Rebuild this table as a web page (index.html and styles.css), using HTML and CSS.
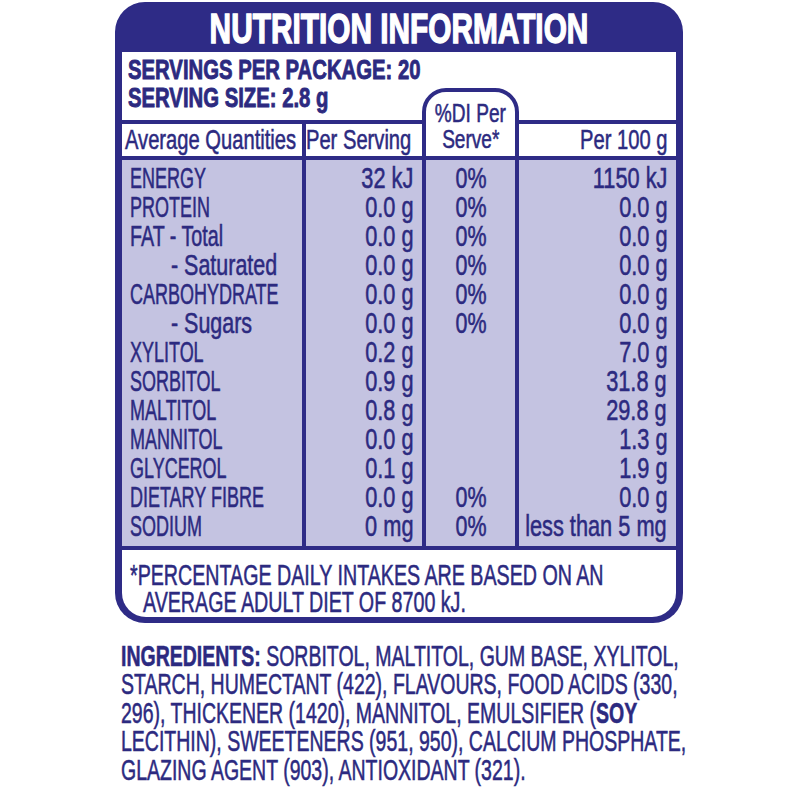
FILE: index.html
```html
<!DOCTYPE html>
<html lang="en">
<head>
<meta charset="utf-8">
<title>Nutrition Information</title>
<link rel="stylesheet" href="styles.css">
</head>
<body>
<main class="page">
  <section class="label">
    <h1 class="title"><span class="tt">NUTRITION INFORMATION</span></h1>
    <div class="inner">
      <div class="head">
        <div class="servings">
          <div class="sv">SERVINGS PER PACKAGE: 20</div>
          <div class="sv">SERVING SIZE: 2.8 g</div>
        </div>
        <div class="h h1"><span class="ht">Average Quantities</span></div>
        <div class="h h2"><span class="ht">Per Serving</span></div>
        <div class="di"><span class="dt">%DI Per</span><span class="dt">Serve*</span></div>
        <div class="h h4"><span class="ht">Per 100 g</span></div>
      </div>
      <div class="rows">
        <div class="col c1">
          <span class="l">ENERGY</span>
          <span class="l">PROTEIN</span>
          <span class="l mx">FAT - Total</span>
          <span class="l sub">- Saturated</span>
          <span class="l">CARBOHYDRATE</span>
          <span class="l sub">- Sugars</span>
          <span class="l">XYLITOL</span>
          <span class="l">SORBITOL</span>
          <span class="l">MALTITOL</span>
          <span class="l">MANNITOL</span>
          <span class="l">GLYCEROL</span>
          <span class="l">DIETARY FIBRE</span>
          <span class="l">SODIUM</span>
        </div>
        <div class="col c2">
          <span class="l">32 kJ</span>
          <span class="l">0.0 g</span>
          <span class="l">0.0 g</span>
          <span class="l">0.0 g</span>
          <span class="l">0.0 g</span>
          <span class="l">0.0 g</span>
          <span class="l">0.2 g</span>
          <span class="l">0.9 g</span>
          <span class="l">0.8 g</span>
          <span class="l">0.0 g</span>
          <span class="l">0.1 g</span>
          <span class="l">0.0 g</span>
          <span class="l">0 mg</span>
        </div>
        <div class="col c3">
          <span class="l">0%</span>
          <span class="l">0%</span>
          <span class="l">0%</span>
          <span class="l">0%</span>
          <span class="l">0%</span>
          <span class="l">0%</span>
          <span class="l blank"></span>
          <span class="l blank"></span>
          <span class="l blank"></span>
          <span class="l blank"></span>
          <span class="l blank"></span>
          <span class="l">0%</span>
          <span class="l">0%</span>
        </div>
        <div class="col c4">
          <span class="l">1150 kJ</span>
          <span class="l">0.0 g</span>
          <span class="l">0.0 g</span>
          <span class="l">0.0 g</span>
          <span class="l">0.0 g</span>
          <span class="l">0.0 g</span>
          <span class="l">7.0 g</span>
          <span class="l">31.8 g</span>
          <span class="l">29.8 g</span>
          <span class="l">1.3 g</span>
          <span class="l">1.9 g</span>
          <span class="l">0.0 g</span>
          <span class="l">less than 5 mg</span>
        </div>
      </div>
      <div class="foot">
        <div class="fl">*PERCENTAGE DAILY INTAKES ARE BASED ON AN</div>
        <div class="fl fl2">AVERAGE ADULT DIET OF 8700 kJ.</div>
      </div>
    </div>
  </section>
  <div class="ingredients">
    <div class="il"><b>INGREDIENTS:</b> SORBITOL, MALTITOL, GUM BASE, XYLITOL,</div>
    <div class="il">STARCH, HUMECTANT (422), FLAVOURS, FOOD ACIDS (330,</div>
    <div class="il">296), THICKENER (1420), MANNITOL, EMULSIFIER (<b>SOY</b></div>
    <div class="il">LECITHIN), SWEETENERS (951, 950), CALCIUM PHOSPHATE,</div>
    <div class="il">GLAZING AGENT (903), ANTIOXIDANT (321).</div>
  </div>
</main>
</body>
</html>
```

FILE: styles.css
```css
* {
  box-sizing: border-box;
  margin: 0;
  padding: 0;
}

html,
body {
  background: #ffffff;
}

body {
  font-family: "Liberation Sans", Arial, sans-serif;
  color: #2c2a80;
  overflow: hidden;
  -webkit-text-stroke: 0.55px currentColor;
}

.page {
  width: 800px;
  height: 800px;
  overflow: hidden;
}

.label {
  margin: 2px 0 0 115px;
  width: 568px;
  background: #2e2b86;
  border-radius: 30px;
  padding: 0 7px 6px;
}

.title {
  height: 50px;
  padding-top: 3px;
  font-size: 42px;
  line-height: 47px;
  font-weight: 700;
  color: #ffffff;
  text-align: center;
  white-space: nowrap;
  -webkit-text-stroke: 1.4px #ffffff;
}

.tt {
  display: block;
  transform: scaleX(0.71);
  transform-origin: center;
}

.inner {
  background: #ffffff;
  border-radius: 0 0 24px 24px;
  color: #2c2a80;
}

.head {
  display: grid;
  grid-template-columns: 184px 116px 97px 157px;
  grid-template-rows: 36px 32px 40px;
}

.servings {
  grid-column: 1 / 3;
  grid-row: 1 / 3;
  padding: 4px 0 0 6px;
  font-weight: 700;
  font-size: 28px;
  line-height: 28px;
  white-space: nowrap;
  -webkit-text-stroke: 0.9px currentColor;
}

.sv {
  transform: scaleX(0.725);
  transform-origin: left;
}

.h {
  grid-row: 3;
  display: flex;
  border-top: 4px solid #2e2b86;
  border-bottom: 4px solid #2e2b86;
  font-size: 28px;
  line-height: 32px;
  white-space: nowrap;
}

.h1 {
  grid-column: 1;
  border-right: 4px solid #2e2b86;
  padding-left: 3px;
}

.h1 .ht {
  transform-origin: left;
}

.h2 {
  grid-column: 2;
  justify-content: flex-end;
  padding-right: 11px;
}

.h4 {
  grid-column: 4;
  justify-content: flex-end;
  padding-right: 9px;
}

.ht {
  display: block;
  transform: scaleX(0.72);
  transform-origin: right;
}

.di {
  grid-column: 3;
  grid-row: 2 / 4;
  display: flex;
  flex-direction: column;
  align-items: center;
  border: 4px solid #2e2b86;
  border-radius: 24px 24px 0 0;
  padding: 8px 0 4px;
  font-size: 26.5px;
  line-height: 26px;
  white-space: nowrap;
  background: #ffffff;
}

.dt {
  display: block;
  transform: scaleX(0.72);
}

.rows {
  display: grid;
  grid-template-columns: 184px 116px 97px 157px;
  background: #c4c3e1;
  border-bottom: 4px solid #2e2b86;
}

.col {
  display: flex;
  flex-direction: column;
  padding: 4px 0 5px;
  font-size: 29px;
  line-height: 29px;
  white-space: nowrap;
}

.l {
  display: block;
  height: 29px;
}

.c1 {
  align-items: flex-start;
  padding-left: 8px;
  border-right: 4px solid #2e2b86;
}

.c1 .l {
  transform: scaleX(0.62);
  transform-origin: left;
}

.c1 .mx {
  transform: scaleX(0.68);
}

.c1 .sub {
  margin-left: 41px;
  transform: scaleX(0.74);
}

.c2,
.c4 {
  align-items: flex-end;
  padding-right: 9px;
}

.c2 .l,
.c4 .l {
  transform: scaleX(0.75);
  transform-origin: right;
}

.c3 {
  align-items: center;
  border-left: 4px solid #2e2b86;
  border-right: 4px solid #2e2b86;
}

.c3 .l {
  transform: scaleX(0.74);
  transform-origin: center;
}

.blank {
  width: 1px;
}

.foot {
  padding: 11px 0 2px 8px;
  font-size: 30px;
  line-height: 27px;
  white-space: nowrap;
}

.fl {
  transform: scaleX(0.655);
  transform-origin: left;
}

.fl2 {
  margin-left: 13px;
}

.ingredients {
  margin: 19px 0 0 121px;
  font-size: 30px;
  line-height: 28.4px;
  white-space: nowrap;
  color: #2c2a80;
}

.il {
  transform: scaleX(0.65);
  transform-origin: left;
}

.il b {
  font-weight: 700;
}
```
